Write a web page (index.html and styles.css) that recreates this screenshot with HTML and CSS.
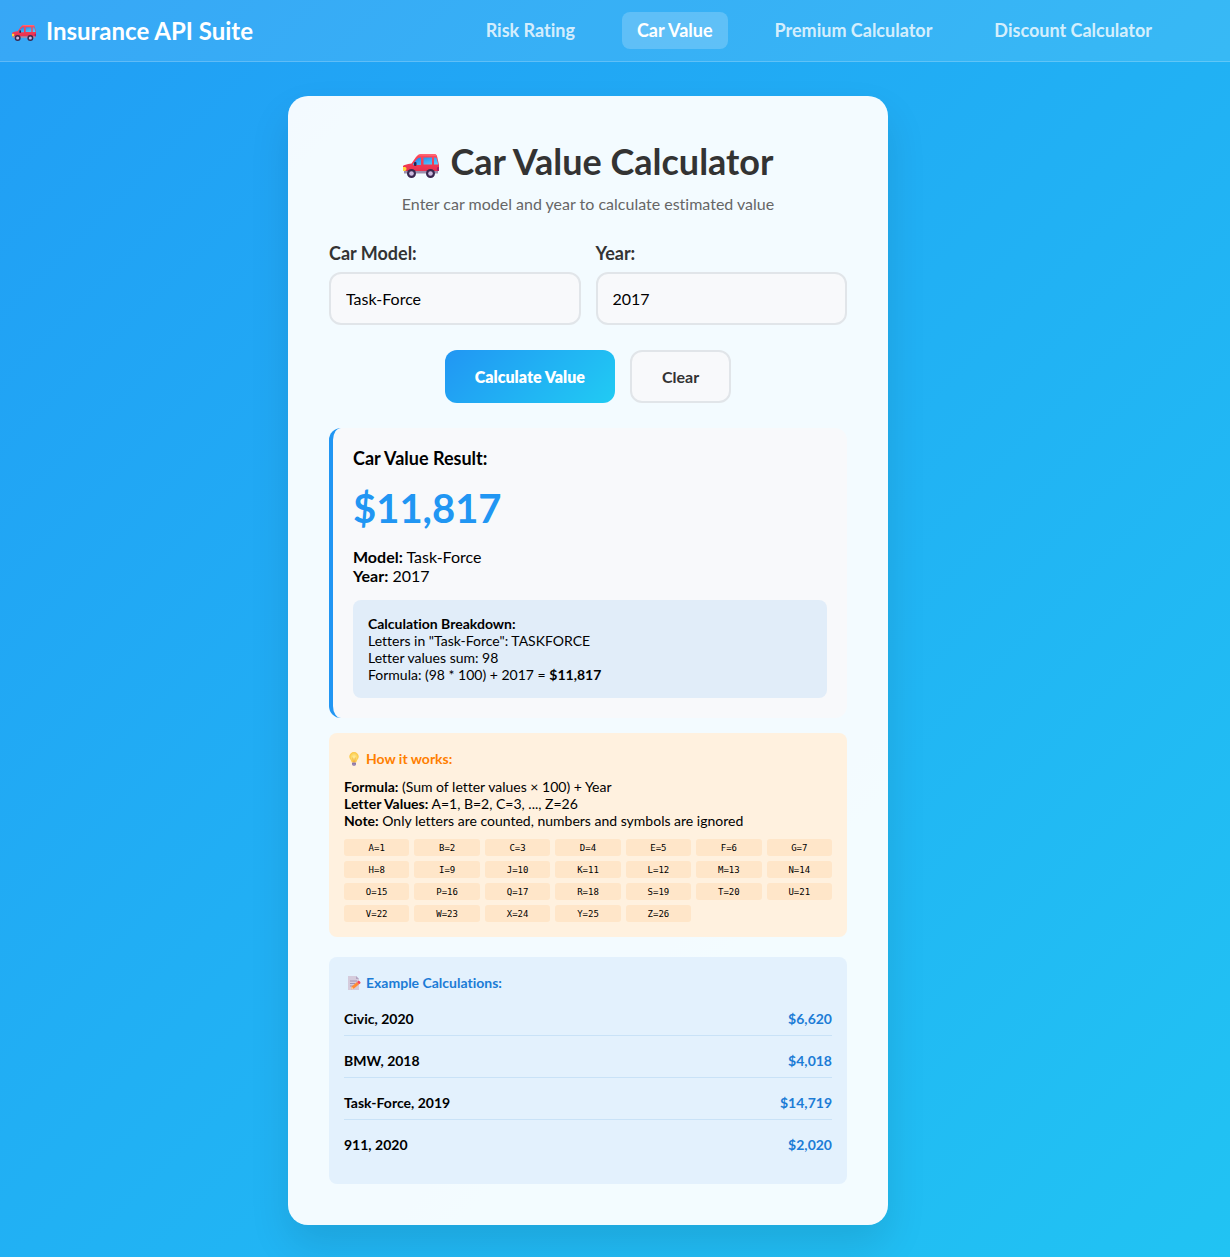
FILE: index.html
```html
<!DOCTYPE html>
<html lang="en">
<head>
<meta charset="utf-8">
<meta name="viewport" content="width=device-width, initial-scale=1">
<title>Insurance API Suite</title>
<link rel="stylesheet" href="styles.css">
</head>
<body>
<svg class="defs" aria-hidden="true">
  <defs>
    <linearGradient id="glass" x1="0" y1="0" x2="1" y2="1"><stop offset="0" stop-color="#1b7fe8"/><stop offset="1" stop-color="#5fd3ff"/></linearGradient>
    <linearGradient id="paint" x1="0" y1="0" x2="0" y2="1"><stop offset="0" stop-color="#ff4a5c"/><stop offset="1" stop-color="#e8304f"/></linearGradient>
    <radialGradient id="glow"><stop offset="0" stop-color="#fff0a0"/><stop offset="1" stop-color="#fbc53f"/></radialGradient>
    <symbol id="car" viewBox="0 0 36 24">
      <path d="M1 16h34v3.500H1z" fill="#9b8fae"/>
      <path d="M0 12q1-1.500 8.500-2.500L13 3q2-3 5-3h13q2.500 0 3.300 3L36 11v6H0z" fill="url(#paint)"/>
      <path d="M15 1.500Q16 0 19 0h12q2.500 0 3 2z" fill="#ff6572"/>
      <path d="M10 10l4-5q1-1.500 4-1.500V11h-8zM20.500 3.500h8.500V10.500h-8.500zM31 3.500h1.500q1 0 1.300 1.200L35.200 10.500H31z" fill="url(#glass)"/>
      <rect x="11" y="8" width="2.500" height="4" rx="1" fill="#31224c"/>
      <path d="M0 13h2q1.500 0 1.500 1.800T2 17H0z" fill="#ffd83b"/>
      <path d="M36 13h-1.500q-1.500 2 0 4H36z" fill="#a91e69"/>
      <circle cx="8.500" cy="19.500" r="4.500" fill="#39274f"/><circle cx="27.500" cy="19.500" r="4.500" fill="#39274f"/>
      <circle cx="8.500" cy="19.500" r="2.300" fill="#cdb9df"/><circle cx="27.500" cy="19.500" r="2.300" fill="#cdb9df"/>
    </symbol>
    <symbol id="bulb" viewBox="0 0 10 14">
      <path d="M5 0a4.700 4.700 0 0 1 4.700 4.700C9.700 7 7.500 8 7.200 10.500H2.800C2.500 8 .3 7 .3 4.700A4.700 4.700 0 0 1 5 0z" fill="url(#glow)"/>
      <path d="M3.700 5.500L4.500 10.500h1l.8-5" fill="none" stroke="#e99a2d" stroke-width=".6"/>
      <path d="M3 10.500h4v2q-.5 1.500-2 1.500t-2-1.500z" fill="#a592bd"/>
      <path d="M3 11.800h4" stroke="#6e5a8c" stroke-width=".6"/>
    </symbol>
    <symbol id="memo" viewBox="0 0 14 14">
      <path d="M1 0h8l3 3v11H1z" fill="#d5cbdc"/>
      <path d="M9 0v3h3z" fill="#b3a4c1"/>
      <path d="M3 5h7M3 7.500h5M3 10h3" stroke="#9c8bae" stroke-width=".9"/>
      <path d="M4 13.300l.7-2.700L10 6l2 2.300-5.300 4.500z" fill="#ff8a35"/>
      <path d="M10 6l1.200-1q.8-.5 1.500.3l.6.8q.6.800-.1 1.300L12 8.300z" fill="#f5415e"/>
      <path d="M4 13.300l.7-2.700 2 2.200z" fill="#ffcfa0"/>
    </symbol>
  </defs>
</svg>

<header class="topbar">
  <div class="brand"><svg class="brand-icon" aria-hidden="true"><use href="#car"/></svg>Insurance API Suite</div>
  <nav class="nav">
    <a class="nav-link" href="#risk">Risk Rating</a>
    <a class="nav-link active" href="#value">Car Value</a>
    <a class="nav-link" href="#premium">Premium Calculator</a>
    <a class="nav-link" href="#discount">Discount Calculator</a>
  </nav>
</header>

<main class="main">
  <div class="card">
    <h1 class="title"><svg class="title-icon" aria-hidden="true"><use href="#car"/></svg>Car Value Calculator</h1>
    <p class="subtitle">Enter car model and year to calculate estimated value</p>

    <form class="form">
      <div class="fields">
        <div class="field"><label class="label" for="model">Car Model:</label><input class="input" id="model" type="text" value="Task-Force"></div>
        <div class="field"><label class="label" for="year">Year:</label><input class="input" id="year" type="text" inputmode="numeric" value="2017"></div>
      </div>
      <div class="actions">
        <button class="btn btn-primary" type="button">Calculate Value</button>
        <button class="btn btn-secondary" type="button">Clear</button>
      </div>
    </form>

    <section class="result">
      <h2 class="result-title">Car Value Result:</h2>
      <div class="amount">$11,817</div>
      <p class="details"><strong>Model:</strong> Task-Force<br><strong>Year:</strong> 2017</p>
      <div class="breakdown"><strong>Calculation Breakdown:</strong><br>Letters in "Task-Force": TASKFORCE<br>Letter values sum: 98<br>Formula: (98 * 100) + 2017 = <strong>$11,817</strong></div>
    </section>

    <section class="panel how">
      <h3 class="panel-title"><svg class="panel-icon" aria-hidden="true"><use href="#bulb"/></svg>How it works:</h3>
      <p class="rules"><strong>Formula:</strong> (Sum of letter values × 100) + Year<br><strong>Letter Values:</strong> A=1, B=2, C=3, ..., Z=26<br><strong>Note:</strong> Only letters are counted, numbers and symbols are ignored</p>
      <div class="letters">
        <span class="letter">A=1</span><span class="letter">B=2</span><span class="letter">C=3</span><span class="letter">D=4</span><span class="letter">E=5</span><span class="letter">F=6</span><span class="letter">G=7</span>
        <span class="letter">H=8</span><span class="letter">I=9</span><span class="letter">J=10</span><span class="letter">K=11</span><span class="letter">L=12</span><span class="letter">M=13</span><span class="letter">N=14</span>
        <span class="letter">O=15</span><span class="letter">P=16</span><span class="letter">Q=17</span><span class="letter">R=18</span><span class="letter">S=19</span><span class="letter">T=20</span><span class="letter">U=21</span>
        <span class="letter">V=22</span><span class="letter">W=23</span><span class="letter">X=24</span><span class="letter">Y=25</span><span class="letter">Z=26</span>
      </div>
    </section>

    <section class="panel examples">
      <h3 class="panel-title"><svg class="panel-icon" aria-hidden="true"><use href="#memo"/></svg>Example Calculations:</h3>
      <ul class="example-list">
        <li class="example"><span>Civic, 2020</span><span class="price">$6,620</span></li>
        <li class="example"><span>BMW, 2018</span><span class="price">$4,018</span></li>
        <li class="example"><span>Task-Force, 2019</span><span class="price">$14,719</span></li>
        <li class="example"><span>911, 2020</span><span class="price">$2,020</span></li>
      </ul>
    </section>
  </div>
</main>
</body>
</html>
```
FILE: styles.css
```css
* { box-sizing: border-box; margin: 0; padding: 0; }

body {
  min-height: 100vh;
  font-family: Lato, sans-serif;
  font-size: 16px;
  font-variant-ligatures: none;
  color: #000;
  background: linear-gradient(135deg, #219ef5, #21c3f3);
}

.defs { position: absolute; width: 0; height: 0; }

.topbar {
  display: flex;
  align-items: center;
  justify-content: space-between;
  padding: 12px 63px 12px 12px;
  background: rgba(255, 255, 255, .1);
  border-bottom: 1px solid rgba(255, 255, 255, .2);
}
.brand {
  display: flex;
  align-items: center;
  gap: 10px;
  font-size: 24px;
  font-weight: 700;
  color: #fff;
}
.brand-icon { width: 24px; height: 16px; margin-top: 5px; }
.nav { display: flex; gap: 32px; }
.nav-link {
  padding: 7px 15px 8px;
  border-radius: 8px;
  font-size: 18px;
  line-height: 22px;
  font-weight: 700;
  color: rgba(255, 255, 255, .8);
  text-decoration: none;
}
.nav-link.active { color: #fff; background: rgba(255, 255, 255, .2); }

.main { padding: 34px 54px 32px 0; }
.card {
  max-width: 600px;
  margin: 0 auto;
  padding: 41px;
  border-radius: 20px;
  background: rgba(255, 255, 255, .95);
  box-shadow: 0 20px 40px rgba(0, 0, 0, .1);
}
.title {
  display: flex;
  align-items: center;
  justify-content: center;
  gap: 12px;
  margin: 2px 0 11px;
  font-size: 36px;
  line-height: 44px;
  font-weight: 700;
  color: #333;
}
.title-icon { width: 36px; height: 24px; margin-top: 10px; }
.subtitle { margin-bottom: 29px; text-align: center; color: #666; }

.fields { display: grid; grid-template-columns: 1fr 1fr; gap: 15px; }
.label {
  display: block;
  margin-bottom: 8px;
  font-size: 18px;
  line-height: 22px;
  font-weight: 700;
  color: #333;
}
.input {
  width: 100%;
  height: 53px;
  padding: 0 15px;
  border: 2px solid #e1e5e9;
  border-radius: 12px;
  font: inherit;
  background: #f8f9fb;
}
.actions { display: flex; justify-content: center; gap: 15px; margin: 25px 0; }
.btn { height: 53px; padding: 0 30px; border: 0; border-radius: 12px; font: inherit; }
.btn-primary { font-weight: 800; color: #fff; background: linear-gradient(135deg, #2196f3, #21cbf3); }
.btn-secondary { font-weight: 700; color: #333; border: 2px solid #e1e5e9; background: #f8f9fb; }

.result {
  margin-bottom: 15px;
  padding: 19px 20px 20px;
  border-left: 4px solid #2196f3;
  border-radius: 12px;
  background: #f8f9fb;
}
.result-title { margin-bottom: 15px; font-size: 18px; line-height: 22px; font-weight: 700; }
.amount { margin-bottom: 15px; font-size: 40px; line-height: 48px; font-weight: 700; color: #2196f3; }
.details { margin-bottom: 15px; line-height: 19px; }
.breakdown {
  padding: 15px;
  border-radius: 8px;
  font-size: 14px;
  line-height: 17px;
  background: #e1edf9;
}

.panel { padding: 15px; border-radius: 8px; font-size: 14px; line-height: 17px; }
.panel-title {
  display: flex;
  align-items: center;
  gap: 5px;
  margin-bottom: 8px;
  padding-left: 3px;
  font-size: 14px;
  line-height: 22px;
}
.panel-icon { width: 14px; height: 14px; }
.how { margin-bottom: 20px; background: #fff1df; }
.how .panel-title { color: #ff7f00; }
.letters { display: grid; grid-template-columns: repeat(7, 1fr); gap: 5px; margin-top: 10px; }
.letter {
  padding: 4px 3px 2px;
  border-radius: 3px;
  font: 9px/11px "DejaVu Sans Mono", monospace;
  text-align: center;
  background: #ffe6c9;
}
.examples { background: #e3f1fd; }
.examples .panel-title, .price { color: #1c7cd6; }
.example-list { list-style: none; }
.example {
  display: flex;
  justify-content: space-between;
  margin-bottom: 8px;
  padding: 8px 0;
  border-bottom: 1px solid #c9e2f7;
  font-weight: 700;
}
.example:last-child { border-bottom: 0; }
```
